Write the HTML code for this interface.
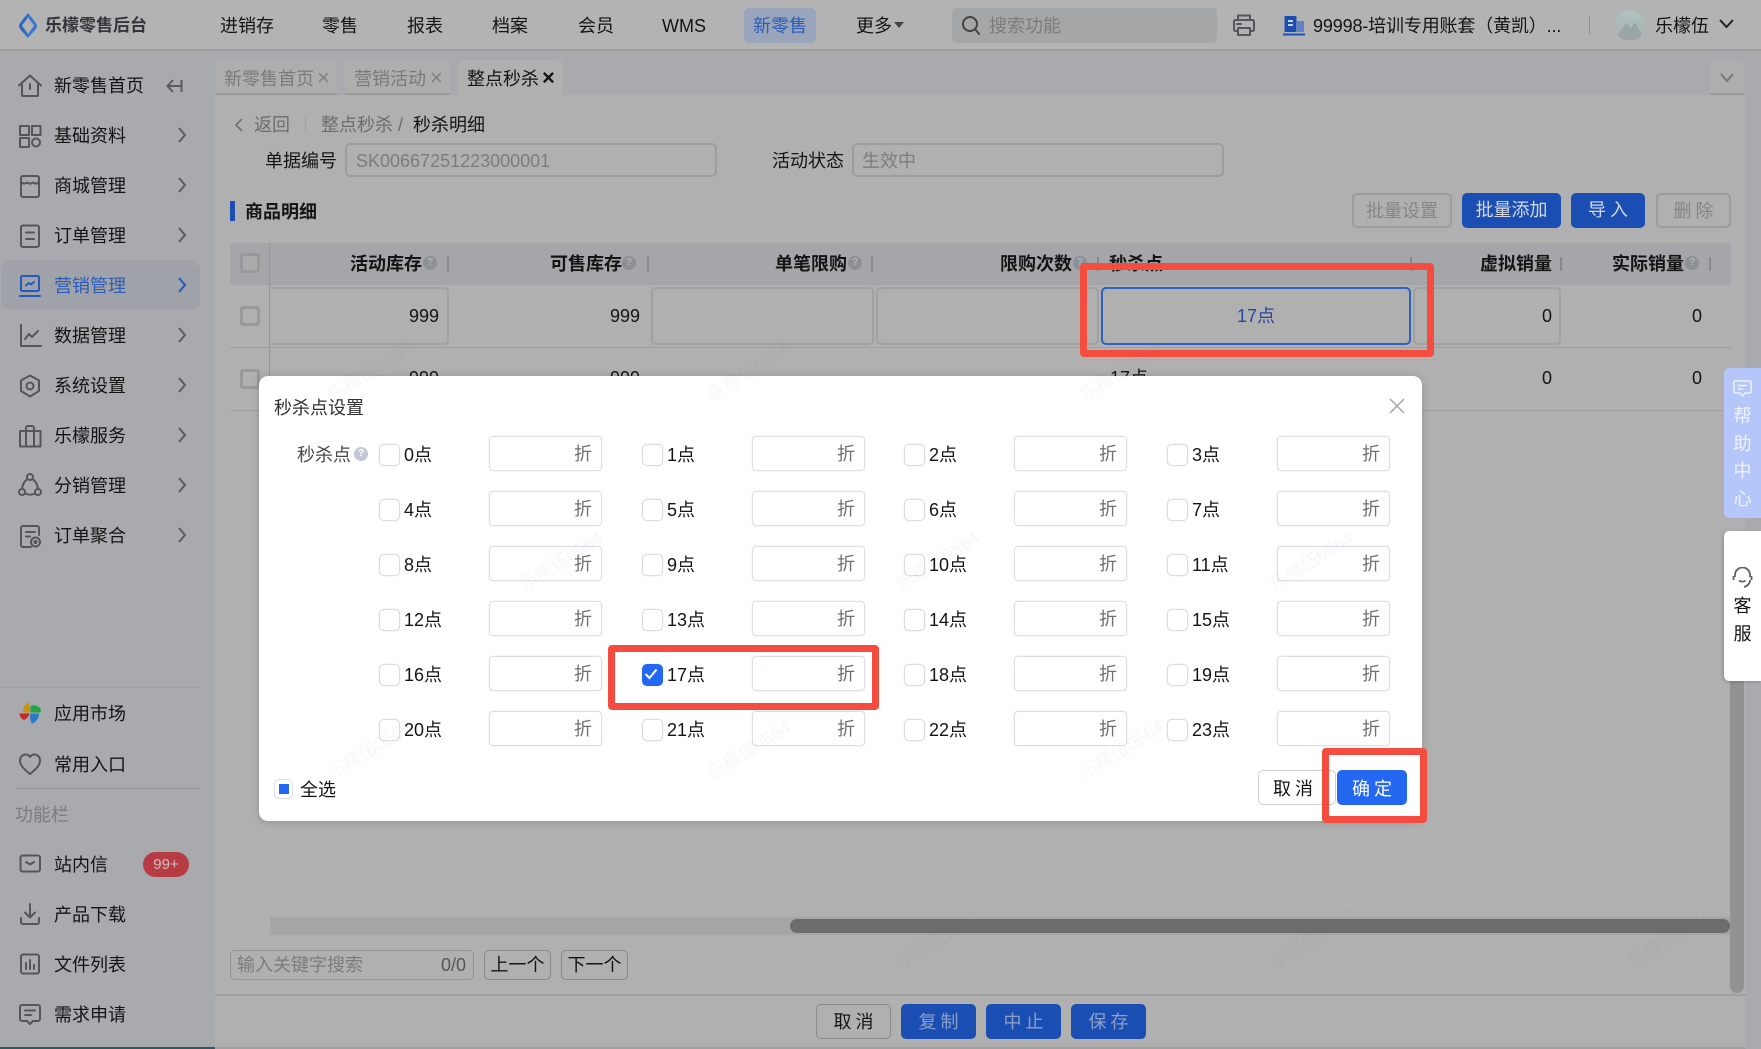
<!DOCTYPE html>
<html lang="zh">
<head>
<meta charset="utf-8">
<title>秒杀点设置</title>
<style>
html,body{margin:0;padding:0;background:#b0b0b0}
#p{position:relative;width:1761px;height:1049px;overflow:hidden;background:#b0b0b0;font:18px/24px "Liberation Sans","Noto Sans CJK SC",sans-serif;color:#141414}
#p div,#p span,#p svg{position:absolute;box-sizing:border-box}
.t{white-space:nowrap;height:24px}
.g{color:#7c7c7c}
.b{font-weight:700}
.ic{fill:none;stroke:#55565c;stroke-width:2;stroke-linecap:round;stroke-linejoin:round;width:24px;height:24px;left:18px}
.ch{fill:none;stroke:#5b5c61;stroke-width:2;width:10px;height:16px;left:177px}
.inp{border:2px solid #9d9d9d;border-radius:5px}
.cb{width:20px;height:20px;border:3px solid #999;border-radius:3px;left:240px;background:#b0b0b0}
.q{width:14px;height:14px;border-radius:50%;background:#8d9097;color:#b4b4b4;font:700 10px/14px "Liberation Sans",sans-serif;text-align:center}
.s{width:2px;height:14px;top:257px;background:#85888c}
.cell{border:2px solid #a1a1a1;border-radius:5px;top:287px;height:58px}
.bt{border-radius:5px;text-align:center;line-height:35px;height:35px;white-space:nowrap}
.bb{background:#1b4eb2;color:#d4d9e3}
.bd{border:2px solid #9c9c9c;color:#858585;line-height:33px}
.bf{background:#1b4eb2;color:#8ca0c9;top:1004px;height:35px;line-height:37px;letter-spacing:4px;padding-left:4px}
.c{width:240px;height:35px}
.c i{position:absolute;left:0;top:8px;width:19px;height:20px;border:1px solid #dcdde0;border-radius:5px;background:#fff;box-shadow:0 0 1px #ccc}
.c b{position:absolute;left:25px;top:7px;font-weight:400;color:#141414;line-height:24px}
.c u{position:absolute;left:110px;top:0;width:113px;height:35px;border:1px solid #dcdfe6;border-radius:4px;text-decoration:none;text-align:right;padding-right:9px;line-height:35px;color:#6f6f6f;box-shadow:0 0 1px #ccc;box-sizing:border-box}
.r{border:7px solid #f44c3f;border-radius:4px;z-index:30}
.w{color:rgba(90,90,90,.05);font-size:18px;transform:rotate(-32deg);white-space:nowrap;z-index:25;width:100px;height:24px;text-align:center}
.x{font-size:22px}
</style>
</head>
<body>
<div id="p">

<!-- header -->
<div style="left:0;top:0;width:1761px;height:51px;background:#b3b3b3;border-bottom:2px solid #9c9d9f"></div>
<svg style="left:19px;top:13px;width:18px;height:25px" viewBox="0 0 18 25"><path d="M9 0C6 4 3 7 .5 11c-.8 1.500-.8 2.500 0 4C3 19 6 21 9 25c.5-2 .2-3.500-1-5.500L3 12.500 8 6c1-2 1.500-4 1-6z" fill="#2c68c0"/><path d="M9 0c3 4 6 7 8.500 11 .8 1.500.8 2.500 0 4C15 19 12 21 9 25c-.5-2 0-3.500 1-5.500l5-7-5-6.500C9 4 8.500 2 9 0z" fill="#3a78cf"/></svg>
<div class="t b" style="left:45px;top:14px;font-size:17px;color:#34363b">乐檬零售后台</div>
<div class="t" style="left:220px;top:14px">进销存</div>
<div class="t" style="left:322px;top:14px">零售</div>
<div class="t" style="left:407px;top:14px">报表</div>
<div class="t" style="left:492px;top:14px">档案</div>
<div class="t" style="left:578px;top:14px">会员</div>
<div class="t" style="left:662px;top:14px">WMS</div>
<div style="left:744px;top:8px;width:72px;height:35px;background:#9aa4ba;border-radius:5px"></div>
<div class="t" style="left:753px;top:14px;color:#2a5cb8">新零售</div>
<div class="t" style="left:856px;top:14px">更多</div>
<svg style="left:894px;top:22px;width:10px;height:7px" viewBox="0 0 10 7"><path d="M0 0h10L5 6z" fill="#444"/></svg>
<div style="left:952px;top:8px;width:265px;height:35px;background:#a5a6a8;border-radius:5px"></div>
<svg class="ic" style="left:960px;top:14px;width:22px;height:22px;stroke:#444" viewBox="0 0 22 22"><circle cx="10" cy="10" r="7"/><path d="M15 15l4 5"/></svg>
<div class="t g" style="left:989px;top:14px">搜索功能</div>
<svg class="ic" style="left:1232px;top:13px;stroke:#55565c" viewBox="0 0 24 24"><path d="M6 7V2.500h12V7M5 18H3.500A1.500 1.500 0 0 1 2 16.500v-8A1.500 1.500 0 0 1 3.500 7h17A1.500 1.500 0 0 1 22 8.500v8a1.500 1.500 0 0 1-1.500 1.500H19M6 15h12v7H6zM5 11h4"/></svg>
<svg style="left:1283px;top:15px;width:22px;height:21px" viewBox="0 0 22 21"><rect x="1.500" y="1" width="12" height="16" rx="1" fill="#1b4eb2"/><rect x="14" y="6" width="7" height="11" fill="#5f84c9"/><rect x="5" y="5" width="5" height="2" fill="#c7d0e0"/><rect x="5" y="9" width="5" height="2" fill="#c7d0e0"/><rect x="0" y="18.500" width="22" height="2" fill="#1b4eb2"/></svg>
<div class="t" style="left:1313px;top:14px;width:262px;overflow:hidden;letter-spacing:-.15px">99998-培训专用账套（黄凯）...</div>
<div style="left:1589px;top:16px;width:1px;height:18px;background:#8d8d8d"></div>
<div style="left:1615px;top:10px;width:30px;height:30px;border-radius:50%;background:linear-gradient(#b0c2c0,#a6b2b0);overflow:hidden"></div>
<svg style="left:1615px;top:10px;width:30px;height:30px" viewBox="0 0 30 30"><path d="M3 25L11 13l5 5 4-6 7 13a15 15 0 0 1-24 0z" fill="#9aa5a5"/></svg>
<div class="t" style="left:1655px;top:14px">乐檬伍</div>
<svg style="left:1719px;top:19px;width:15px;height:10px;fill:none;stroke:#222;stroke-width:2" viewBox="0 0 15 10"><path d="M1 1l6.500 7L14 1"/></svg>

<!-- sidebar -->
<div style="left:0;top:51px;width:215px;height:998px;background:#a8aaad"></div>
<div style="left:0;top:1047px;width:215px;height:2px;background:#2b5c62"></div>
<div style="left:1px;top:260px;width:199px;height:50px;border-radius:10px;background:#a0a2a9"></div>

<svg class="ic" style="top:74px" viewBox="0 0 24 24"><path d="M1 11.500L12 1.500l11 10M4 9v12a1 1 0 0 0 1 1h14a1 1 0 0 0 1-1V9M12 10v5"/></svg>
<div class="t" style="left:54px;top:74px">新零售首页</div>
<svg style="left:166px;top:79px;width:17px;height:14px;fill:none;stroke:#5b5c61;stroke-width:2" viewBox="0 0 17 14"><path d="M7 1L1.500 7 7 13M1.500 7H15M15.500 1v12"/></svg>

<svg class="ic" style="top:124px" viewBox="0 0 24 24"><rect x="2" y="2" width="9" height="9"/><rect x="14" y="2" width="8.500" height="9"/><rect x="2" y="14" width="9" height="9"/><circle cx="18" cy="18.500" r="4"/></svg>
<div class="t" style="left:54px;top:124px">基础资料</div>
<svg class="ch" style="top:127px" viewBox="0 0 10 16"><path d="M2 1l6 7-6 7"/></svg>

<svg class="ic" style="top:174px" viewBox="0 0 24 24"><rect x="3" y="2" width="18" height="21" rx="2"/><path d="M3 8c2 2 4 2 6 .5 2 1.500 4 1.500 6 0 2 1.500 4 1.500 6-.5M3 11v-3M21 11V8"/></svg>
<div class="t" style="left:54px;top:174px">商城管理</div>
<svg class="ch" style="top:177px" viewBox="0 0 10 16"><path d="M2 1l6 7-6 7"/></svg>

<svg class="ic" style="top:224px" viewBox="0 0 24 24"><rect x="3" y="1.500" width="18" height="21.500" rx="2"/><path d="M8 8.500h8M8 15h8"/></svg>
<div class="t" style="left:54px;top:224px">订单管理</div>
<svg class="ch" style="top:227px" viewBox="0 0 10 16"><path d="M2 1l6 7-6 7"/></svg>

<svg class="ic" style="top:274px;stroke:#2459bd" viewBox="0 0 24 24"><rect x="3" y="2" width="18" height="15" rx="1.500"/><path d="M2 22h20M8 11.500l3-2.500 2 1.500 3-2.500"/></svg>
<div class="t" style="left:54px;top:274px;color:#2a5cb8">营销管理</div>
<svg class="ch" style="top:277px;stroke:#2459bd" viewBox="0 0 10 16"><path d="M2 1l6 7-6 7"/></svg>

<svg class="ic" style="top:324px" viewBox="0 0 24 24"><path d="M3 1v21h20M7 15l4-5 3 3 6-6"/></svg>
<div class="t" style="left:54px;top:324px">数据管理</div>
<svg class="ch" style="top:327px" viewBox="0 0 10 16"><path d="M2 1l6 7-6 7"/></svg>

<svg class="ic" style="top:374px" viewBox="0 0 24 24"><path d="M12 1.500l9 5V17l-9 5.500L3 17V6.500z"/><circle cx="12" cy="12" r="3.500"/></svg>
<div class="t" style="left:54px;top:374px">系统设置</div>
<svg class="ch" style="top:377px" viewBox="0 0 10 16"><path d="M2 1l6 7-6 7"/></svg>

<svg class="ic" style="top:424px" viewBox="0 0 24 24"><rect x="2" y="7" width="20.500" height="15.500"/><path d="M8 22.500V4a2 2 0 0 1 2-2h4a2 2 0 0 1 2 2v18.500"/></svg>
<div class="t" style="left:54px;top:424px">乐檬服务</div>
<svg class="ch" style="top:427px" viewBox="0 0 10 16"><path d="M2 1l6 7-6 7"/></svg>

<svg class="ic" style="top:473px" viewBox="0 0 24 24"><circle cx="12" cy="4" r="3"/><circle cx="4" cy="19" r="3"/><circle cx="20" cy="19" r="3"/><path d="M9.500 6C6.500 8 4.500 11.500 4 16M14.500 6c3 2 5 5.500 5.500 10M7 20.500c3 1.500 7 1.500 10 0"/></svg>
<div class="t" style="left:54px;top:474px">分销管理</div>
<svg class="ch" style="top:477px" viewBox="0 0 10 16"><path d="M2 1l6 7-6 7"/></svg>

<svg class="ic" style="top:524px" viewBox="0 0 24 24"><path d="M21 11V4a2 2 0 0 0-2-2H5a2 2 0 0 0-2 2v17a2 2 0 0 0 2 2h8M8 8h9M8 12.500h4"/><circle cx="17.500" cy="18" r="4.500"/><circle cx="17.500" cy="18" r="1"/></svg>
<div class="t" style="left:54px;top:524px">订单聚合</div>
<svg class="ch" style="top:527px" viewBox="0 0 10 16"><path d="M2 1l6 7-6 7"/></svg>

<div style="left:0;top:687px;width:200px;height:1px;background:#9fa1a4"></div>
<svg style="left:19px;top:702px;width:22px;height:22px" viewBox="0 0 22 22"><path d="M10.500 10.500H4.500C3 8 5 3 9 .5c2 2.500 2.500 6.500 1.500 10z" fill="#c8940c"/><path d="M11.500 10.500V4c2.500-1.500 7-1 10 2.500.5 1.500.5 3 0 4z" fill="#26a045"/><path d="M10.500 11.500H.5c0 2.500 1.500 5 4.500 6.500 2.500-1 5-3.500 5.500-6.500z" fill="#c6282a"/><path d="M11.500 11.500h8.500c.5 4-3 9-7 10-2-3-2.500-6.500-1.500-10z" fill="#2a7ac8"/></svg>
<div class="t" style="left:54px;top:702px">应用市场</div>
<svg class="ic" style="top:752px" viewBox="0 0 24 24"><path d="M12 22C6 17 2 13.500 2 8.500 2 5 4.500 2.500 7.500 2.500c2 0 3.500 1 4.500 2.500 1-1.500 2.500-2.500 4.500-2.500 3 0 5.500 2.500 5.500 6 0 5-4 8.500-10 13.500z"/></svg>
<div class="t" style="left:54px;top:753px">常用入口</div>
<div style="left:15px;top:788px;width:185px;height:1px;background:#929396"></div>
<div class="t g" style="left:15px;top:803px">功能栏</div>
<svg class="ic" style="top:852px" viewBox="0 0 24 24"><rect x="2.500" y="3.500" width="19.500" height="16" rx="2"/><path d="M8 10l4 2.500 4-2.500"/></svg>
<div class="t" style="left:54px;top:853px">站内信</div>
<div style="left:143px;top:852px;width:46px;height:25px;border-radius:13px;background:#b73b42;color:#d8bcbc;font-size:15px;line-height:25px;text-align:center">99+</div>
<svg class="ic" style="top:902px" viewBox="0 0 24 24"><path d="M12 2v13M7 10.500l5 5 5-5M3 16v4a2 2 0 0 0 2 2h14a2 2 0 0 0 2-2v-4"/></svg>
<div class="t" style="left:54px;top:903px">产品下载</div>
<svg class="ic" style="top:952px" viewBox="0 0 24 24"><rect x="3" y="2.500" width="18" height="19" rx="2"/><path d="M8 11v6M12 8v9M16 13v4"/></svg>
<div class="t" style="left:54px;top:953px">文件列表</div>
<svg class="ic" style="top:1002px" viewBox="0 0 24 24"><path d="M4 3h16a2 2 0 0 1 2 2v12a2 2 0 0 1-2 2h-5l-3 3-3-3H4a2 2 0 0 1-2-2V5a2 2 0 0 1 2-2zM7 8.500h10M7 13h6"/></svg>
<div class="t" style="left:54px;top:1003px">需求申请</div>

<!-- tabs -->
<div style="left:215px;top:51px;width:1546px;height:44px;background:#a8aaad"></div>
<div style="left:1746px;top:95px;width:15px;height:954px;background:#a8aaad"></div>
<div style="left:215px;top:60px;width:122px;height:35px;background:#aeaeae;border-radius:5px 5px 0 0;border-bottom:2px solid #9a9a9a"></div>
<div class="t" style="left:224px;top:67px;color:#7a7a7a">新零售首页</div>
<div class="t x" style="left:317px;top:66px;color:#808080">×</div>
<div style="left:345px;top:60px;width:105px;height:35px;background:#aeaeae;border-radius:5px 5px 0 0;border-bottom:2px solid #9a9a9a"></div>
<div class="t" style="left:354px;top:67px;color:#7a7a7a">营销活动</div>
<div class="t x" style="left:430px;top:66px;color:#808080">×</div>
<div style="left:458px;top:60px;width:105px;height:35px;background:#b0b0b0;border-radius:5px 5px 0 0"></div>
<div class="t" style="left:467px;top:67px">整点秒杀</div>
<div class="t b x" style="left:542px;top:66px">×</div>
<div style="left:1710px;top:60px;width:34px;height:35px;background:#aeaeae;border-radius:5px 5px 0 0;border-bottom:2px solid #9a9a9a"></div>
<svg style="left:1720px;top:73px;width:14px;height:9px;fill:none;stroke:#777;stroke-width:2" viewBox="0 0 14 9"><path d="M1 1l6 7 6-7"/></svg>

<!-- breadcrumb and form -->
<svg style="left:234px;top:117px;width:10px;height:16px;fill:none;stroke:#6a6a6a;stroke-width:1.500" viewBox="0 0 10 16"><path d="M8 2L2 8l6 6"/></svg>
<div class="t" style="left:254px;top:113px;color:#6c6c6c">返回</div>
<div style="left:305px;top:117px;width:1px;height:14px;background:#a0a0a0"></div>
<div class="t" style="left:321px;top:113px;color:#6c6c6c">整点秒杀</div>
<div class="t" style="left:398px;top:113px;color:#6c6c6c">/</div>
<div class="t" style="left:413px;top:113px">秒杀明细</div>
<div class="t" style="left:265px;top:149px">单据编号</div>
<div class="inp" style="left:345px;top:143px;width:372px;height:34px"></div>
<div class="t g" style="left:356px;top:149px">SK00667251223000001</div>
<div class="t" style="left:772px;top:149px">活动状态</div>
<div class="inp" style="left:852px;top:143px;width:372px;height:34px"></div>
<div class="t g" style="left:862px;top:149px">生效中</div>

<div style="left:230px;top:201px;width:5px;height:20px;background:#1b4eb2"></div>
<div class="t b" style="left:245px;top:200px">商品明细</div>
<div class="bt bd" style="left:1352px;top:193px;width:100px">批量设置</div>
<div class="bt bb" style="left:1462px;top:193px;width:99px">批量添加</div>
<div class="bt bb" style="left:1571px;top:193px;width:74px;letter-spacing:4px;padding-left:4px">导入</div>
<div class="bt bd" style="left:1656px;top:193px;width:75px;letter-spacing:4px;padding-left:4px">删除</div>

<!-- table -->
<div style="left:230px;top:243px;width:1501px;height:42px;background:#a4a6a9"></div>
<div style="left:269px;top:243px;width:1px;height:167px;background:#949699"></div>
<div style="left:230px;top:347px;width:1501px;height:1px;background:#9e9e9e"></div>
<div style="left:230px;top:410px;width:1501px;height:1px;background:#9e9e9e"></div>
<div class="cb" style="top:253px;background:#a9abad"></div>
<div class="cb" style="top:306px"></div>
<div class="cb" style="top:369px"></div>

<div class="t b" style="left:350px;top:252px">活动库存</div><div class="q" style="left:423px;top:256px">?</div><div class="s" style="left:447px"></div>
<div class="t b" style="left:550px;top:252px">可售库存</div><div class="q" style="left:622px;top:256px">?</div><div class="s" style="left:647px"></div>
<div class="t b" style="left:775px;top:252px">单笔限购</div><div class="q" style="left:848px;top:256px">?</div><div class="s" style="left:871px"></div>
<div class="t b" style="left:1000px;top:252px">限购次数</div><div class="q" style="left:1073px;top:256px">?</div><div class="s" style="left:1097px"></div>
<div class="t b" style="left:1109px;top:252px">秒杀点</div><div class="s" style="left:1410px"></div>
<div class="t b" style="left:1480px;top:252px">虚拟销量</div><div class="s" style="left:1560px"></div>
<div class="t b" style="left:1612px;top:252px">实际销量</div><div class="q" style="left:1685px;top:256px">?</div><div class="s" style="left:1709px"></div>

<div class="cell" style="left:269px;width:180px;border-left:0;border-radius:0 5px 5px 0"></div>
<div class="cell" style="left:651px;width:223px"></div>
<div class="cell" style="left:876px;width:223px"></div>
<div class="cell" style="left:1101px;width:310px;border-color:#2f62c0"></div>
<div class="cell" style="left:1413px;width:148px"></div>

<div class="t" style="left:409px;top:304px">999</div>
<div class="t" style="left:610px;top:304px">999</div>
<div class="t" style="left:1237px;top:304px;color:#27479b">17点</div>
<div class="t" style="left:1542px;top:304px">0</div>
<div class="t" style="left:1692px;top:304px">0</div>
<div class="t" style="left:409px;top:366px">999</div>
<div class="t" style="left:610px;top:366px">999</div>
<div class="t" style="left:1110px;top:366px">17点</div>
<div class="t" style="left:1542px;top:366px">0</div>
<div class="t" style="left:1692px;top:366px">0</div>

<!-- scrollbars -->
<div style="left:270px;top:917px;width:1460px;height:18px;background:#a6a6a6"></div>
<div style="left:790px;top:919px;width:940px;height:14px;border-radius:7px;background:#6c6c6c"></div>
<div style="left:1730px;top:600px;width:14px;height:393px;border-radius:0 0 7px 7px;background:#929292"></div>

<!-- bottom search -->
<div class="inp" style="left:230px;top:950px;width:244px;height:30px;border-width:1px;border-color:#949494"></div>
<div class="t g" style="left:237px;top:953px">输入关键字搜索</div>
<div class="t" style="left:441px;top:953px;color:#555">0/0</div>
<div class="bt" style="left:484px;top:950px;width:67px;height:30px;line-height:28px;border:1px solid #8a8a8a">上一个</div>
<div class="bt" style="left:561px;top:950px;width:67px;height:30px;line-height:28px;border:1px solid #8a8a8a">下一个</div>

<div style="left:215px;top:994px;width:1531px;height:2px;background:#a0a0a0"></div>
<div style="left:215px;top:1047px;width:1531px;height:2px;background:#a0a0a0"></div>
<div class="bt" style="left:816px;top:1004px;width:75px;line-height:35px;border:1px solid #8a8a8a;letter-spacing:4px;padding-left:4px">取消</div>
<div class="bt bf" style="left:901px;width:75px">复制</div>
<div class="bt bf" style="left:986px;width:75px">中止</div>
<div class="bt bf" style="left:1071px;width:75px">保存</div>

<!-- help tabs -->
<div style="left:1724px;top:368px;width:37px;height:150px;background:#b5c6fb;border-radius:5px 0 0 5px;z-index:12"></div>
<svg style="left:1733px;top:380px;width:19px;height:17px;fill:none;stroke:#f0f3fc;stroke-width:1.500;z-index:13" viewBox="0 0 19 17"><path d="M2 1h15a1 1 0 0 1 1 1v10a1 1 0 0 1-1 1h-5l-2.500 3L7 13H2a1 1 0 0 1-1-1V2a1 1 0 0 1 1-1zM5 5.500h9M5 9h5"/></svg>
<div style="left:1724px;top:403px;width:37px;text-align:center;color:#f0f3fc;line-height:27.500px;z-index:13">帮<br>助<br>中<br>心</div>
<div style="left:1724px;top:531px;width:37px;height:150px;background:#fff;border-radius:5px 0 0 5px;box-shadow:-1px 1px 3px rgba(0,0,0,.2);z-index:12"></div>
<svg style="left:1732px;top:567px;width:21px;height:21px;fill:none;stroke:#5e6069;stroke-width:1.800;z-index:13" viewBox="0 0 21 21"><path d="M3 10V8a7.500 7.500 0 0 1 15 0v2M1.500 9v4M19.500 9v4M18 13c0 4-3 6-6 7M7 13.500c2 1.500 5 1.500 6.500 0"/></svg>
<div style="left:1724px;top:592px;width:37px;text-align:center;line-height:28px;z-index:13">客<br>服</div>

<!-- modal -->
<div style="left:259px;top:376px;width:1163px;height:445px;background:#fff;border-radius:9px;box-shadow:0 1px 8px rgba(0,0,0,.18);z-index:14"></div>
<div id="m" style="left:0;top:0;width:1761px;height:1049px;z-index:15">
<div class="t" style="left:274px;top:396px;color:#303133">秒杀点设置</div>
<svg style="left:1389px;top:398px;width:16px;height:16px;fill:none;stroke:#a5a5a5;stroke-width:1.500" viewBox="0 0 16 16"><path d="M1 1l14 14M15 1L1 15"/></svg>
<div class="t" style="left:297px;top:443px;color:#4a4a4a">秒杀点</div>
<div class="q" style="left:354px;top:447px;background:#c3c8d6;color:#fff">?</div>

<div class="c" style="left:379px;top:436px"><i></i><b>0点</b><u>折</u></div>
<div class="c" style="left:642px;top:436px"><i></i><b>1点</b><u>折</u></div>
<div class="c" style="left:904px;top:436px"><i></i><b>2点</b><u>折</u></div>
<div class="c" style="left:1167px;top:436px"><i></i><b>3点</b><u>折</u></div>
<div class="c" style="left:379px;top:491px"><i></i><b>4点</b><u>折</u></div>
<div class="c" style="left:642px;top:491px"><i></i><b>5点</b><u>折</u></div>
<div class="c" style="left:904px;top:491px"><i></i><b>6点</b><u>折</u></div>
<div class="c" style="left:1167px;top:491px"><i></i><b>7点</b><u>折</u></div>
<div class="c" style="left:379px;top:546px"><i></i><b>8点</b><u>折</u></div>
<div class="c" style="left:642px;top:546px"><i></i><b>9点</b><u>折</u></div>
<div class="c" style="left:904px;top:546px"><i></i><b>10点</b><u>折</u></div>
<div class="c" style="left:1167px;top:546px"><i></i><b>11点</b><u>折</u></div>
<div class="c" style="left:379px;top:601px"><i></i><b>12点</b><u>折</u></div>
<div class="c" style="left:642px;top:601px"><i></i><b>13点</b><u>折</u></div>
<div class="c" style="left:904px;top:601px"><i></i><b>14点</b><u>折</u></div>
<div class="c" style="left:1167px;top:601px"><i></i><b>15点</b><u>折</u></div>
<div class="c" style="left:379px;top:656px"><i></i><b>16点</b><u>折</u></div>
<div class="c" style="left:642px;top:656px"><i style="background:#2468f2;border-color:#2468f2"></i><b>17点</b><u>折</u></div>
<div class="c" style="left:904px;top:656px"><i></i><b>18点</b><u>折</u></div>
<div class="c" style="left:1167px;top:656px"><i></i><b>19点</b><u>折</u></div>
<div class="c" style="left:379px;top:711px"><i></i><b>20点</b><u>折</u></div>
<div class="c" style="left:642px;top:711px"><i></i><b>21点</b><u>折</u></div>
<div class="c" style="left:904px;top:711px"><i></i><b>22点</b><u>折</u></div>
<div class="c" style="left:1167px;top:711px"><i></i><b>23点</b><u>折</u></div>
<svg style="left:644px;top:668px;width:14px;height:12px;fill:none;stroke:#fff;stroke-width:2" viewBox="0 0 14 12"><path d="M1.500 6l4 4 7-8.500"/></svg>

<div style="left:274px;top:779px;width:19px;height:20px;border:1px solid #dcdde0;border-radius:5px;background:#fff"></div>
<div style="left:279px;top:784px;width:10px;height:10px;background:#2468f2"></div>
<div class="t" style="left:300px;top:778px">全选</div>
<div class="bt" style="left:1258px;top:770px;width:78px;height:35px;border:1px solid #cfcfcf;background:#fff;letter-spacing:4px;text-align:left;padding-left:14px;line-height:37px">取消</div>
<div class="bt" style="left:1337px;top:770px;width:70px;height:35px;background:#2468f2;color:#fff;letter-spacing:4px;padding-left:4px;line-height:38px">确定</div>
</div>

<!-- annotation boxes -->
<div class="r" style="left:1080px;top:263px;width:354px;height:94px"></div>
<div class="r" style="left:608px;top:645px;width:271px;height:65px"></div>
<div class="r" style="left:1322px;top:748px;width:105px;height:75px"></div>

<!-- watermarks -->
<div class="w" style="left:320px;top:360px">乐檬伍0564</div>
<div class="w" style="left:699px;top:360px">乐檬伍0564</div>
<div class="w" style="left:1072px;top:360px">乐檬伍0564</div>
<div class="w" style="left:511px;top:549px">乐檬伍0564</div>
<div class="w" style="left:888px;top:549px">乐檬伍0564</div>
<div class="w" style="left:1262px;top:549px">乐檬伍0564</div>
<div class="w" style="left:320px;top:738px">乐檬伍0564</div>
<div class="w" style="left:699px;top:738px">乐檬伍0564</div>
<div class="w" style="left:1072px;top:738px">乐檬伍0564</div>
<div class="w" style="left:888px;top:927px">乐檬伍0564</div>
<div class="w" style="left:1262px;top:927px">乐檬伍0564</div>
<div class="w" style="left:1620px;top:927px">乐檬伍0564</div>

</div>
</body>
</html>
